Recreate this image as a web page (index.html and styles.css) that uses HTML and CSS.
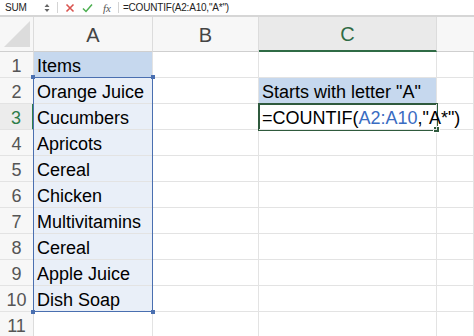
FILE: index.html
```html
<!DOCTYPE html>
<html>
<head>
<meta charset="utf-8">
<link rel="stylesheet" href="styles.css">
</head>
<body>
<div class="fbar">
  <div class="namebox">SUM</div>
  <div class="spin"><svg width="6" height="10" viewBox="0 0 6 10"><path d="M0.5 4 L3 1 L5.5 4 Z M0.5 6 L3 9 L5.5 6 Z" fill="#666"/></svg></div>
  <div class="sep"></div>
  <div class="fx-icons">
    <svg class="ico" width="10" height="10" viewBox="0 0 10 10"><path d="M1.5 1.5 L8.5 8.5 M8.5 1.5 L1.5 8.5" stroke="#d9534f" stroke-width="1.6" fill="none"/></svg>
    <svg class="ico" width="11" height="10" viewBox="0 0 11 10"><path d="M1 5.5 L4 8.5 L10 1.5" stroke="#4caf50" stroke-width="1.5" fill="none"/></svg>
    <span class="fx">fx</span>
  </div>
  <div class="sep"></div>
  <div class="ftext">=COUNTIF(A2:A10,"A*")</div>
</div>
<div class="band"></div>
<div class="sheet">
  <div class="corner"><svg width="34" height="34" viewBox="0 0 34 34"><path d="M30 4 L30 30 L4 30 Z" fill="#dcdcdc"/></svg></div>
  <div class="ch">A</div>
  <div class="ch">B</div>
  <div class="ch ch-act">C</div>
  <div class="ch ch-last"></div>

  <div class="rh">1</div><div class="c hdr">Items</div><div class="c"></div><div class="c"></div><div class="c"></div>
  <div class="rh">2</div><div class="c sel">Orange Juice</div><div class="c"></div><div class="c hdr">Starts with letter "A"</div><div class="c"></div>
  <div class="rh rh-act">3</div><div class="c sel">Cucumbers</div><div class="c"></div><div class="c active">=COUNTIF(<span class="ref">A2:A10</span>,"A*")</div><div class="c"></div>
  <div class="rh">4</div><div class="c sel">Apricots</div><div class="c"></div><div class="c"></div><div class="c"></div>
  <div class="rh">5</div><div class="c sel">Cereal</div><div class="c"></div><div class="c"></div><div class="c"></div>
  <div class="rh">6</div><div class="c sel">Chicken</div><div class="c"></div><div class="c"></div><div class="c"></div>
  <div class="rh">7</div><div class="c sel">Multivitamins</div><div class="c"></div><div class="c"></div><div class="c"></div>
  <div class="rh">8</div><div class="c sel">Cereal</div><div class="c"></div><div class="c"></div><div class="c"></div>
  <div class="rh">9</div><div class="c sel">Apple Juice</div><div class="c"></div><div class="c"></div><div class="c"></div>
  <div class="rh">10</div><div class="c sel">Dish Soap</div><div class="c"></div><div class="c"></div><div class="c"></div>
  <div class="rh">11</div><div class="c"></div><div class="c"></div><div class="c"></div><div class="c"></div>

  <div class="range"><span class="h h-tl"></span><span class="h h-tr"></span><span class="h h-bl"></span><span class="h h-br"></span></div>
  <div class="activebox"><span class="h h-br2"></span></div>
</div>
</body>
</html>
```

FILE: styles.css
```css
html, body {
  margin: 0;
  padding: 0;
  background: #fff;
  width: 474px;
  height: 336px;
  overflow: hidden;
}
body {
  font-family: "Liberation Sans", Arial, sans-serif;
}
.fbar {
  height: 15px;
  display: flex;
  align-items: center;
  font-size: 10px;
  color: #222;
  background: #fff;
}
.namebox {
  width: 39px;
  padding-left: 5px;
  letter-spacing: -0.2px;
}
.spin {
  width: 10px;
  display: flex;
  align-items: center;
}
.sep {
  width: 1px;
  height: 11px;
  background: #d4d4d4;
  margin: 0 3px;
}
.fx-icons {
  display: flex;
  align-items: center;
  gap: 7px;
  padding: 0 4px 0 4px;
}
.fx {
  font-family: "Liberation Serif", serif;
  font-style: italic;
  font-size: 11px;
  color: #555;
  margin-left: 3px;
}
.ftext {
  padding-left: 1px;
  font-size: 10px;
  letter-spacing: -0.2px;
}
.band {
  height: 2px;
  background: #d6d6d6;
}
.sheet {
  display: grid;
  grid-template-columns: 34px 119px 106px 178px 37px;
  grid-template-rows: 35px repeat(11, 26px);
  position: relative;
}
.corner {
  background: #f7f7f7;
  border-right: 1px solid #dcdcdc;
  border-bottom: 1px solid #cfcfcf;
  box-sizing: border-box;
  overflow: hidden;
}
.corner svg { display: block; }
.ch {
  background: #f7f7f7;
  border-right: 1px solid #dcdcdc;
  border-bottom: 1px solid #cfcfcf;
  box-sizing: border-box;
  display: flex;
  align-items: center;
  justify-content: center;
  font-size: 20px;
  color: #444;
  padding-top: 2px;
}
.ch-act {
  background: #eaeaea;
  border-bottom: 2px solid #2f6b45;
  color: #2f6b45;
}
.ch-last { border-right: none; }
.rh {
  background: #f7f7f7;
  border-right: 1px solid #dcdcdc;
  border-bottom: 1px solid #e3e3e3;
  box-sizing: border-box;
  display: flex;
  align-items: flex-end;
  justify-content: center;
  font-size: 18px;
  color: #555;
  padding-bottom: 0;
}
.rh-act {
  color: #2f7d4a;
  background: #ececec;
  border-right: 2px solid #2f7d4a;
}
.c {
  border-right: 1px solid #e3e3e3;
  border-bottom: 1px solid #e3e3e3;
  box-sizing: border-box;
  font-size: 18px;
  color: #000;
  white-space: nowrap;
  display: flex;
  align-items: flex-end;
  padding: 0 0 0 3px;
  overflow: visible;
  min-width: 0;
}
.hdr { background: #c6d8ee; }
.sel { background: #e9eff8; }
.active {
  position: relative;
  z-index: 2;
}
.ref { color: #3a6cc2; }
.range {
  position: absolute;
  left: 33px;
  top: 60px;
  width: 120px;
  height: 235px;
  box-sizing: border-box;
  border: 1px solid #4a6fb0;
  pointer-events: none;
}
.activebox {
  position: absolute;
  left: 258px;
  top: 86px;
  width: 180px;
  height: 28px;
  box-sizing: border-box;
  border: 2px solid #2f5a3d;
  z-index: 1;
}
.h {
  position: absolute;
  width: 4px;
  height: 4px;
  background: #4a6fb0;
}
.h-tl { left: -3px; top: -3px; }
.h-tr { right: -3px; top: -3px; }
.h-bl { left: -3px; bottom: -3px; }
.h-br { right: -3px; bottom: -3px; }
.h-br2 { right: -4px; bottom: -4px; background: #2f5a3d; width: 5px; height: 5px; border: 1px solid #fff; }
```
